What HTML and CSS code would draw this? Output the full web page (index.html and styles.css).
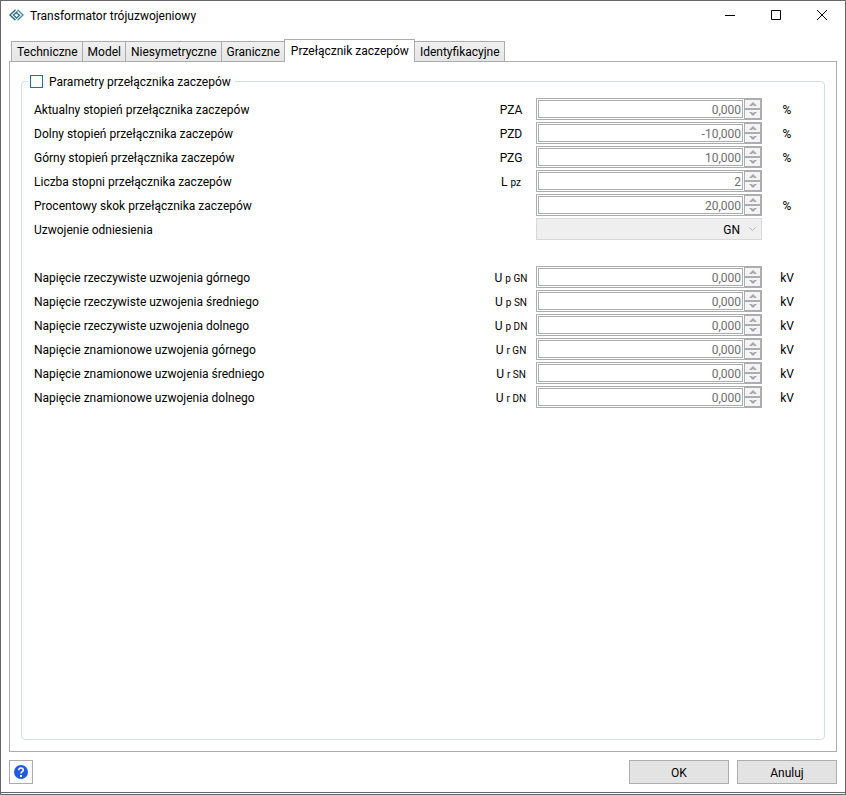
FILE: index.html
```html
<!DOCTYPE html>
<html lang="pl">
<head>
    <meta charset="UTF-8">
    <meta name="viewport" content="width=device-width, initial-scale=1.0">
    <title>Transformator trójuzwojeniowy</title>
    <link rel="stylesheet" href="styles.css">
</head>
<body>

    <div class="window">
        <header class="title-bar">
            <svg class="logo" viewBox="0 0 15 12" fill="none" stroke-width="1.3">
                <path d="M6.5 .7L1 6L6.5 11.3" stroke="#25607d"/>
                <path d="M8.5 .7L14 6L8.5 11.3" stroke="#3f8ba8"/>
                <path d="M8.5 2.6L4.5 6L7.5 9M6.5 3.2L10.5 6.2L7 9.6" stroke="#2b6a86"/>
            </svg>
            <h1>Transformator trójuzwojeniowy</h1>
            <button class="caption-button" aria-label="Minimalizuj">
                <svg width="10" height="10"><path d="M0 5.5h10" stroke="#000"/></svg>
            </button>
            <button class="caption-button" aria-label="Maksymalizuj">
                <svg width="10" height="10"><path d="M.5 .5h9v9h-9z" stroke="#000" fill="none"/></svg>
            </button>
            <button class="caption-button" aria-label="Zamknij">
                <svg width="10" height="10"><path d="M0 0L10 10M10 0L0 10" stroke="#000"/></svg>
            </button>
        </header>

        <div class="tabs" role="tablist">
            <button class="tab" role="tab">Techniczne</button>
            <button class="tab" role="tab">Model</button>
            <button class="tab" role="tab">Niesymetryczne</button>
            <button class="tab" role="tab">Graniczne</button>
            <button class="tab active" role="tab" aria-selected="true">Przełącznik zaczepów</button>
            <button class="tab" role="tab">Identyfikacyjne</button>
        </div>

        <main class="panel">
            <fieldset class="group">
                <legend>
                    <input type="checkbox" id="params">
                    <label for="params">Parametry przełącznika zaczepów</label>
                </legend>

                <div class="rows">
                    <div class="row">
                        <label for="pza">Aktualny stopień przełącznika zaczepów</label>
                        <span class="symbol">PZA</span>
                        <div class="spin"><input type="text" id="pza" value="0,000" disabled></div>
                        <span class="unit">%</span>
                    </div>
                    <div class="row">
                        <label for="pzd">Dolny stopień przełącznika zaczepów</label>
                        <span class="symbol">PZD</span>
                        <div class="spin"><input type="text" id="pzd" value="-10,000" disabled></div>
                        <span class="unit">%</span>
                    </div>
                    <div class="row">
                        <label for="pzg">Górny stopień przełącznika zaczepów</label>
                        <span class="symbol">PZG</span>
                        <div class="spin"><input type="text" id="pzg" value="10,000" disabled></div>
                        <span class="unit">%</span>
                    </div>
                    <div class="row">
                        <label for="lpz">Liczba stopni przełącznika zaczepów</label>
                        <span class="symbol">L <small>pz</small></span>
                        <div class="spin"><input type="text" id="lpz" value="2" disabled></div>
                    </div>
                    <div class="row">
                        <label for="skok">Procentowy skok przełącznika zaczepów</label>
                        <span class="symbol"></span>
                        <div class="spin"><input type="text" id="skok" value="20,000" disabled></div>
                        <span class="unit">%</span>
                    </div>
                    <div class="row">
                        <label for="uzw">Uzwojenie odniesienia</label>
                        <span class="symbol"></span>
                        <div class="combo">
                            <select id="uzw" disabled>
                                <option>GN</option>
                            </select>
                            <svg width="7" height="5"><path d="M.5 .5L3.5 3.5L6.5 .5" stroke="#b5b5b5" fill="none"/></svg>
                        </div>
                    </div>
                </div>

                <div class="rows">
                    <div class="row">
                        <label for="upgn">Napięcie rzeczywiste uzwojenia górnego</label>
                        <span class="symbol">U <small>p GN</small></span>
                        <div class="spin"><input type="text" id="upgn" value="0,000" disabled></div>
                        <span class="unit">kV</span>
                    </div>
                    <div class="row">
                        <label for="upsn">Napięcie rzeczywiste uzwojenia średniego</label>
                        <span class="symbol">U <small>p SN</small></span>
                        <div class="spin"><input type="text" id="upsn" value="0,000" disabled></div>
                        <span class="unit">kV</span>
                    </div>
                    <div class="row">
                        <label for="updn">Napięcie rzeczywiste uzwojenia dolnego</label>
                        <span class="symbol">U <small>p DN</small></span>
                        <div class="spin"><input type="text" id="updn" value="0,000" disabled></div>
                        <span class="unit">kV</span>
                    </div>
                    <div class="row">
                        <label for="urgn">Napięcie znamionowe uzwojenia górnego</label>
                        <span class="symbol">U <small>r GN</small></span>
                        <div class="spin"><input type="text" id="urgn" value="0,000" disabled></div>
                        <span class="unit">kV</span>
                    </div>
                    <div class="row">
                        <label for="ursn">Napięcie znamionowe uzwojenia średniego</label>
                        <span class="symbol">U <small>r SN</small></span>
                        <div class="spin"><input type="text" id="ursn" value="0,000" disabled></div>
                        <span class="unit">kV</span>
                    </div>
                    <div class="row">
                        <label for="urdn">Napięcie znamionowe uzwojenia dolnego</label>
                        <span class="symbol">U <small>r DN</small></span>
                        <div class="spin"><input type="text" id="urdn" value="0,000" disabled></div>
                        <span class="unit">kV</span>
                    </div>
                </div>
            </fieldset>
        </main>

        <footer class="footer">
            <button class="help" aria-label="Pomoc">
                <svg width="14" height="14" viewBox="0 0 14 14">
                    <circle cx="7" cy="7" r="7" fill="#2159e0"/>
                    <path d="M4.8 5.2C4.8 2.3 9.3 2.4 9.3 5C9.3 6.7 7 6.7 7 8.6" stroke="#fff" stroke-width="1.6" fill="none"/>
                    <path d="M6 10h2v2h-2z" fill="#fff"/>
                </svg>
            </button>
            <button class="button">OK</button>
            <button class="button">Anuluj</button>
        </footer>
    </div>

    <script src="script.js"></script>
</body>
</html>
```
FILE: styles.css
```css
* {
    box-sizing: border-box;
}
body {
    margin: 0;
    background-color: #fff;
    color: #000;
    font-family: Roboto, "Noto Sans", sans-serif;
    font-size: 12px;
    line-height: 16px;
}
button, input, select {
    font: inherit;
    color: inherit;
    margin: 0;
}
button {
    padding: 0;
}

.window {
    display: flex;
    flex-direction: column;
    min-height: 100vh;
    border: 1px solid #66676b;
    border-bottom: 3px double #66676b;
}

.title-bar {
    display: flex;
    align-items: center;
    height: 28px;
    padding-left: 8px;
}
.title-bar h1 {
    flex: 1;
    margin: 0 0 0 6px;
    padding-top: 2px;
    font-size: 12px;
    font-weight: normal;
}
.logo {
    width: 15px;
    height: 12px;
}
.caption-button {
    display: flex;
    align-items: center;
    justify-content: center;
    width: 46px;
    height: 28px;
    border: none;
    background: none;
}

/* tabs */
.tabs {
    display: flex;
    align-items: flex-end;
    height: 33px;
    padding: 0 10px;
}
.tab {
    height: 21px;
    margin-right: -1px;
    padding: 0 4px 0 5px;
    border: 1px solid #acacac;
    background: linear-gradient(#f0f0f0, #e5e5e5);
    white-space: nowrap;
}
.tab.active {
    height: 23px;
    padding: 0 5px 1px 6px;
    border-bottom: none;
    background: #fff;
    z-index: 1;
}

.panel {
    display: flex;
    flex: 1;
    margin: -1px 8px 0;
    padding: 11px;
    border: 1px solid #acacac;
}
.group {
    flex: 1;
    min-width: 0;
    margin: 0;
    padding: 8px 12px;
    border: 1px solid #d5dfe5;
    border-radius: 4px;
}
.group legend {
    display: flex;
    align-items: center;
    gap: 6px;
    height: 16px;
    margin-left: -6px;
    padding: 0 4px 0 2px;
}
.group legend input {
    appearance: none;
    width: 13px;
    height: 13px;
    border: 1px solid #1a6fb8;
    background-color: #fff;
}
.group legend label {
    padding-top: 2px;
}

.rows {
    margin-bottom: 24px;
}
.row {
    display: grid;
    grid-template-columns: 1fr 50px 226px 50px;
    align-items: center;
    height: 24px;
}
.row label, .symbol, .unit {
    padding-top: 2px;
}
.symbol, .unit {
    text-align: center;
    white-space: nowrap;
}
.symbol small {
    font-size: 10px;
}

/* numeric field with up / down buttons */
.spin {
    display: flex;
    height: 22px;
    border: 1px solid #abadb3;
}
.spin input {
    flex: 1;
    min-width: 0;
    margin: 1px 0 1px 1px;
    padding: 2px 1px 0;
    border: 1px solid #abadb3;
    background-color: #fff;
    color: #6d6d6d;
    text-align: right;
}
.arrows {
    display: flex;
    flex-direction: column;
    gap: 2px;
    width: 17px;
    margin-left: 1px;
    padding: 1px;
    background-color: #abadb3;
}
.arrows button {
    display: flex;
    flex: 1;
    align-items: center;
    justify-content: center;
    min-height: 0;
    border: none;
    background-color: #f4f4f4;
}

.combo {
    display: flex;
    align-items: center;
    height: 22px;
    padding-right: 5px;
    border: 1px solid #d9d9d9;
    background-color: #efefef;
}
.combo select {
    flex: 1;
    appearance: none;
    padding: 2px 9px 0 0;
    border: none;
    background: none;
    opacity: 1;
    text-align: right;
    text-align-last: right;
}

/* bottom buttons */
.footer {
    display: flex;
    gap: 8px;
    padding: 8px;
}
.button {
    width: 100px;
    height: 24px;
    padding-top: 2px;
    border: 1px solid #adadad;
    background-color: #e3e3e3;
}
.help {
    display: flex;
    align-items: center;
    justify-content: center;
    width: 24px;
    height: 24px;
    margin-right: auto;
    border: 1px solid #adadad;
    background-color: #fff;
}
```
FILE: script.js
```js
// Add the up / down buttons to every numeric field
document.querySelectorAll('.spin').forEach(function (spin) {
    const arrows = document.createElement('div');
    arrows.className = 'arrows';
    arrows.innerHTML =
        '<button disabled aria-label="Zwiększ"><svg width="8" height="4"><path d="M0 4L4 0L8 4H5.5L4 3L2.5 4z" fill="#a6a6a6"/></svg></button>' +
        '<button disabled aria-label="Zmniejsz"><svg width="8" height="4"><path d="M0 0L4 4L8 0H5.5L4 1L2.5 0z" fill="#a6a6a6"/></svg></button>';
    spin.appendChild(arrows);
});
```
